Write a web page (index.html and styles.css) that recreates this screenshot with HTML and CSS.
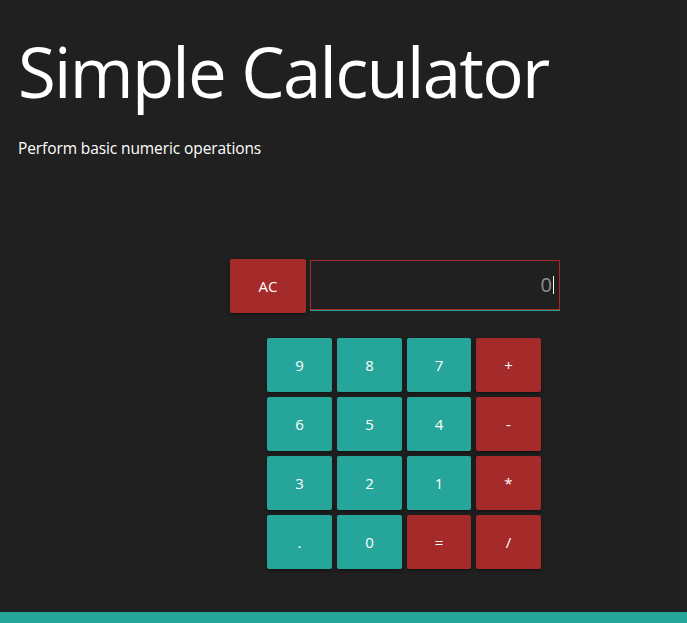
FILE: index.html
```html
<!DOCTYPE html>
<html lang="en">
<head>
<meta charset="utf-8">
<title>Simple Calculator</title>
<link rel="stylesheet" href="styles.css">
</head>
<body>
<header class="hero">
  <h1 class="hero-title">Simple Calculator</h1>
  <p class="hero-sub">Perform basic numeric operations</p>
</header>
<main class="calc">
  <div class="calc-top">
    <button class="btn btn-red btn-ac">AC</button>
    <div class="display"><span class="display-value">0</span><span class="caret"></span></div>
  </div>
  <div class="keys">
    <button class="btn btn-teal">9</button>
    <button class="btn btn-teal">8</button>
    <button class="btn btn-teal">7</button>
    <button class="btn btn-red">+</button>
    <button class="btn btn-teal">6</button>
    <button class="btn btn-teal">5</button>
    <button class="btn btn-teal">4</button>
    <button class="btn btn-red">-</button>
    <button class="btn btn-teal">3</button>
    <button class="btn btn-teal">2</button>
    <button class="btn btn-teal">1</button>
    <button class="btn btn-red">*</button>
    <button class="btn btn-teal">.</button>
    <button class="btn btn-teal">0</button>
    <button class="btn btn-red">=</button>
    <button class="btn btn-red">/</button>
  </div>
</main>
<footer class="footer-bar"></footer>
</body>
</html>
```
FILE: styles.css
```css
* { box-sizing: border-box; }
html, body {
  margin: 0;
  padding: 0;
  background: #202020;
  color: #ffffff;
  font-family: "Open Sans", "Noto Sans", sans-serif;
  overflow: hidden;
}
.hero {
  padding: 31px 0 0 18px;
}
.hero-title {
  margin: 0;
  font-size: 69px;
  line-height: 80px;
  font-weight: 400;
  letter-spacing: -1.75px;
}
.hero-sub {
  margin: 27px 0 0;
  font-size: 15.5px;
  line-height: 20px;
  letter-spacing: -0.1px;
}
.calc {
  margin-top: 101px;
}
.calc-top {
  display: flex;
  align-items: flex-start;
  gap: 4px;
  padding-left: 230px;
}
.btn {
  border: none;
  border-radius: 2px;
  color: #ffffff;
  font-family: inherit;
  font-size: 15px;
  padding: 0;
  box-shadow: 0 2px 2px 0 rgba(0,0,0,.14), 0 3px 1px -2px rgba(0,0,0,.12), 0 1px 5px 0 rgba(0,0,0,.2);
}
.btn-teal { background: #26a69a; }
.btn-red { background: #a52a2a; }
.btn-ac {
  width: 76px;
  height: 54px;
}
.display {
  margin-top: 1px;
  width: 250px;
  height: 50px;
  border: 1px solid #a52a2a;
  box-shadow: 0 1px 0 0 #26a69a;
  display: flex;
  align-items: center;
  justify-content: flex-end;
  padding-right: 5px;
}
.display-value {
  color: #8c9095;
  font-size: 20px;
  line-height: 20px;
}
.caret {
  width: 1px;
  height: 18px;
  background: #ffffff;
  margin-left: 1px;
}
.keys {
  margin-top: 25px;
  margin-left: 267px;
  display: grid;
  grid-template-columns: 65px 65px 64px 65px;
  grid-auto-rows: 54px;
  gap: 5px;
}
.footer-bar {
  margin-top: 43px;
  height: 11px;
  background: #26a69a;
}
```
